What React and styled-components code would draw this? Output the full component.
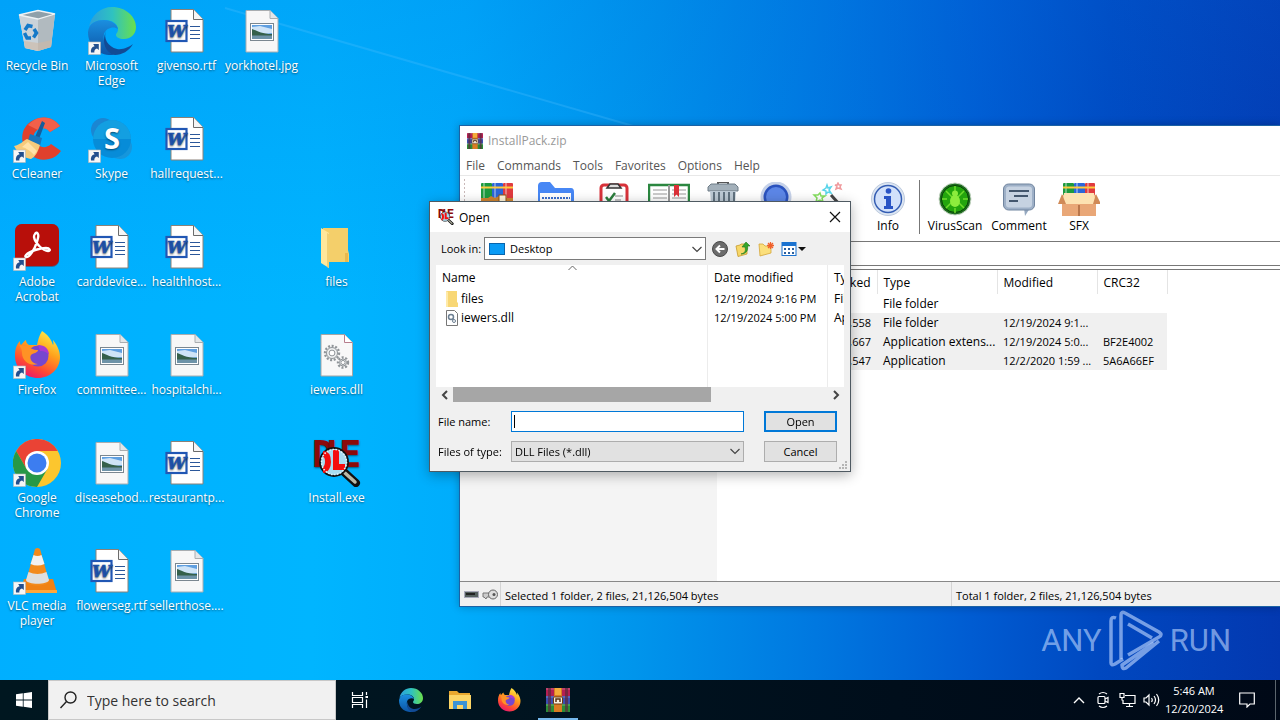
import React from "react";
import styled, { createGlobalStyle } from "styled-components";

const GlobalStyle = createGlobalStyle`
  * {
    box-sizing: border-box;
  }

  body {
    margin: 0;
    font-family: "Open Sans", "Noto Sans", sans-serif;
    font-size: 12px;
    color: #000;
  }

  button, input, select {
    font: inherit;
    color: inherit;
    border-radius: 0;
    margin: 0;
  }
`;

/* ---------- Desktop ---------- */

const Screen = styled.div`
  display: flex;
  flex-direction: column;
  height: 100vh;
  overflow: hidden;
`;

const Desktop = styled.main`
  position: relative;
  flex: 1;
  min-height: 0;
  overflow: hidden;
  background:
    linear-gradient(180deg, rgba(0, 110, 225, 0.2) 0, rgba(0, 110, 225, 0) 45%),
    linear-gradient(91deg, #00afff 0%, #00b5ff 25%, #00adfc 36%, #0095ec 50%, #0078e0 64%, #005cd2 76%, #0048c0 86%, #0338b0 100%);
`;

const LightBeam = styled.svg`
  position: absolute;
  inset: 0;
  width: 100%;
  height: 100%;
`;

const IconGrid = styled.div`
  position: relative;
  display: grid;
  grid-template-columns: 74px repeat(4, 75px);
  grid-auto-rows: 108px;
`;

const Shortcut = styled.a`
  grid-column: ${(p) => p.$col};
  grid-row: ${(p) => p.$row};
  display: flex;
  flex-direction: column;
  align-items: center;
  gap: 3px;
  padding-top: 7px;
  color: #fff;
  text-decoration: none;
  text-align: center;
  line-height: 15px;
  white-space: nowrap;
  text-shadow: 0 1px 2px rgba(0, 0, 0, 0.5);
`;

const ShortcutLabel = styled.span`
  white-space: pre-line;
`;

const Watermark = styled.div`
  position: absolute;
  right: 49px;
  bottom: 8px;
  display: flex;
  align-items: center;
  gap: 6px;
  color: rgba(190, 215, 255, 0.62);
  font-family: "Roboto", sans-serif;
  font-size: 31px;
  line-height: 62px;
`;

/* ---------- Archive window ---------- */

const ArchiveWindow = styled.section`
  position: absolute;
  left: 459px;
  right: 0;
  top: 125px;
  height: 482px;
  display: flex;
  flex-direction: column;
  background: #fff;
  border: 1px solid #1c62a5;
  border-right: 0;
  box-shadow: 0 0 8px rgba(0, 0, 0, 0.25);
`;

const ArchiveTitle = styled.header`
  display: flex;
  align-items: center;
  gap: 5px;
  height: 29px;
  padding-left: 7px;
  color: #999;
`;

const Menu = styled.nav`
  display: flex;
  gap: 12px;
  height: 21px;
  padding-left: 6px;
  line-height: 21px;
  border-bottom: 1px solid #e8e8e8;
`;

const MenuItem = styled.a`
  color: #555;
  text-decoration: none;
`;

const Toolbar = styled.div`
  display: flex;
  align-items: stretch;
  height: 66px;
  padding-left: 8px;
  border-bottom: 1px solid #777;
  background: repeating-linear-gradient(#c9b9b9 0 2px, #fff 2px 4px) 4px 3px / 1px 58px no-repeat;
`;

const Tool = styled.button`
  display: flex;
  flex-direction: column;
  align-items: center;
  width: ${(p) => p.$width}px;
  padding: 6px 0 0;
  border: 0;
  background: none;
  line-height: 17px;
  white-space: nowrap;
`;

const ToolDivider = styled.span`
  width: 1px;
  margin: 4px 2px 7px 3px;
  background: #777;
`;

const AddressInput = styled.input`
  height: 24px;
  border: 0;
  border-bottom: 1px solid #777;
  background: #fff;
  outline: 0;
`;

const ArchiveBody = styled.div`
  display: flex;
  flex: 1;
  min-height: 0;
  margin-top: 3px;
  border-top: 1px solid #777;
  border-bottom: 1px solid #888;
`;

const TreePane = styled.aside`
  width: 257px;
  background: #f4f4f4;
`;

const ArchiveTable = styled.table`
  align-self: flex-start;
  width: 450px;
  table-layout: fixed;
  border-collapse: collapse;

  th, td {
    height: 19px;
    padding: 0 6px;
    text-align: left;
    font-weight: 400;
    line-height: 19px;
    overflow: hidden;
    white-space: nowrap;
  }

  th {
    height: 24px;
    border-right: 1px solid #e4e4e4;
  }

  td {
    font-size: 11px;
  }

  th:nth-child(2), td:nth-child(2) {
    text-align: right;
  }

  td:nth-child(3) {
    font-size: 12px;
    padding-right: 0;
  }
`;

const ArchiveRow = styled.tr`
  background: ${(p) => (p.$selected ? "#f0f0f0" : "none")};
`;

const StatusBar = styled.footer`
  display: flex;
  height: 24px;
  background: #f0f0f0;
  font-size: 11px;
`;

const StatusCell = styled.div`
  display: flex;
  align-items: center;
  width: ${(p) => p.$width};
  padding: 2px 0 0 4px;
  border-left: ${(p) => (p.$first ? "0" : "1px solid #d4d4d4")};
`;

/* ---------- Open dialog ---------- */

const Dialog = styled.section`
  position: absolute;
  left: 429px;
  top: 201px;
  width: 422px;
  display: flex;
  flex-direction: column;
  background: #f0f0f0;
  border: 1px solid #4f5a62;
  box-shadow: 0 3px 12px rgba(0, 0, 0, 0.3);
`;

const DialogTitle = styled.header`
  display: flex;
  align-items: center;
  gap: 5px;
  height: 30px;
  padding: 0 8px;
  background: #fff;
`;

const CloseButton = styled.button`
  display: flex;
  margin-left: auto;
  padding: 0;
  border: 0;
  background: none;
`;

const LookInRow = styled.div`
  display: flex;
  align-items: center;
  height: 33px;
  padding-left: 11px;
  font-size: 11px;
`;

const LookInLabel = styled.label`
  width: 43px;
  white-space: nowrap;
`;

const SelectBox = styled.div`
  display: flex;
  align-items: center;
  width: ${(p) => p.$width}px;
  height: ${(p) => (p.$filled ? 21 : 23)}px;
  padding: 0 3px;
  gap: 4px;
  border: 1px solid ${(p) => (p.$filled ? "#adadad" : "#7a7a7a")};
  background: ${(p) => (p.$filled ? "#e1e1e1" : "#fff")};
`;

const Select = styled.select`
  flex: 1;
  min-width: 0;
  height: 19px;
  padding: 0;
  border: 0;
  outline: 0;
  appearance: none;
  background: none;
`;

const NavButtons = styled.div`
  display: flex;
  gap: 7px;
  margin-left: 6px;
`;

const NavButton = styled.button`
  display: flex;
  padding: 0;
  border: 0;
  background: none;
`;

const FileList = styled.div`
  margin: 0 6px;
  height: 122px;
  overflow: hidden;
  background:
    linear-gradient(#ececec, #ececec) 271px 0 / 1px 100% no-repeat,
    linear-gradient(#ececec, #ececec) 391px 0 / 1px 100% no-repeat,
    #fff;
`;

const SortMark = styled.svg`
  position: absolute;
  left: 132px;
  top: 0;
`;

const FileTable = styled.table`
  position: relative;
  width: 408px;
  table-layout: fixed;
  border-collapse: collapse;

  th, td {
    height: 19px;
    padding: 0 0 0 6px;
    text-align: left;
    font-weight: 400;
    line-height: 19px;
    overflow: hidden;
    white-space: nowrap;
  }

  th {
    height: 24px;
  }

  td:nth-child(2) {
    font-size: 11px;
  }
`;

const FileName = styled.span`
  display: flex;
  align-items: center;
  gap: 2px;
  padding-left: 3px;
`;

const ScrollBar = styled.div`
  display: flex;
  align-items: center;
  height: 15px;
  margin: 0 6px 4px;
`;

const ScrollArrow = styled.button`
  display: flex;
  justify-content: center;
  width: 17px;
  padding: 0;
  border: 0;
  background: none;
`;

const ScrollTrack = styled.div`
  flex: 1;
  height: 100%;
`;

const ScrollThumb = styled.div`
  width: 69%;
  height: 100%;
  background: #a6a6a6;
`;

const FieldRow = styled.div`
  display: flex;
  align-items: center;
  height: 30px;
  padding: 0 13px 0 8px;
  font-size: 11px;
`;

const FieldLabel = styled.label`
  width: 73px;
`;

const FileInput = styled.input`
  width: 233px;
  height: 21px;
  padding: 0 3px;
  border: 1px solid #0078d7;
  outline: 0;
  background: linear-gradient(#000, #000) 2px 3px / 1px 13px no-repeat #fff;
  caret-color: transparent;
`;

const DialogButton = styled.button`
  width: 73px;
  height: 21px;
  margin-left: auto;
  padding: 0;
  border: ${(p) => (p.$primary ? "2px solid #0078d7" : "1px solid #adadad")};
  background: #e1e1e1;
`;

const GripRow = styled.div`
  display: flex;
  justify-content: flex-end;
  align-items: flex-end;
  height: 5px;
  padding: 0 2px 1px 0;
`;

/* ---------- Taskbar ---------- */

const Taskbar = styled.footer`
  display: flex;
  align-items: stretch;
  height: 40px;
  background: linear-gradient(90deg, #001720, #001420 40%, #000e1b 70%, #000917);
  color: #fff;
`;

const TaskButton = styled.button`
  display: flex;
  align-items: center;
  justify-content: center;
  width: ${(p) => p.$width || 48}px;
  padding: 0;
  border: 0;
  background: ${(p) =>
    p.$active ? "linear-gradient(#76b9ed, #76b9ed) 50% 100% / 40px 2px no-repeat" : "none"};
`;

const SearchBox = styled.label`
  display: flex;
  align-items: center;
  gap: 10px;
  width: 288px;
  padding: 0 11px;
  border: 1px solid #c8c8c8;
  background: #f1f1f1;
  color: #333;
`;

const SearchInput = styled.input`
  flex: 1;
  min-width: 0;
  padding: 0;
  border: 0;
  outline: 0;
  background: none;
  font-size: 14px;

  &::placeholder {
    color: #333;
    opacity: 1;
  }
`;

const Apps = styled.div`
  display: flex;
  gap: 1px;
  margin-left: 3px;
`;

const Tray = styled.div`
  display: flex;
  margin-left: auto;
`;

const Clock = styled.time`
  width: 60px;
  padding: 2px 0 0 2px;
  font-size: 11px;
  line-height: 18px;
  text-align: center;
  white-space: pre-line;
`;

const ShowDesktop = styled.button`
  width: 5px;
  margin-left: 4px;
  padding: 0;
  border: 0;
  border-left: 1px solid #5c666d;
  background: none;
`;

/* ---------- Icons ---------- */

const Icon48 = ({ children, link }) => (
  <svg width="48" height="48" viewBox="0 0 48 48" aria-hidden="true">
    {children}
    {link && (
      <g>
        <rect x="0.500" y="35" width="12" height="12.500" fill="#f6f6f6" stroke="#b8b8b8" strokeWidth="0.6" />
        <path d="M3 45.500c-.6-3 .6-5.600 3.600-6.300L5.200 37h5.600v6L9 41.400c-2 .4-3 2-2.600 4.100z" fill="#234f8e" />
      </g>
    )}
  </svg>
);

const RecycleIcon = () => (
  <Icon48>
    <path d="M6 8 25 3.500 42 7 38 40 25 44 12 41z" fill="#d8dde1" />
    <path d="M6 8 25 12 25 44 12 41z" fill="#c9d2d9" />
    <path d="M25 12 42 7 38 40 25 44z" fill="#b1babf" />
    <path d="M6 8 25 3.500 42 7 25 12z" fill="#8fa0aa" stroke="#eef2f4" strokeWidth="1.300" />
    <path d="M11 34 25 36 39 33 38 40 25 44 12 41z" fill="#cfb9a5" opacity=".6" />
    <g fill="none" stroke="#1479c8" strokeWidth="3.500">
      <path d="M12 23l3-4.500 4.500 1" />
      <path d="M21 22l2.500 4-3 4.500" />
      <path d="M18 31h-4l-2.500-5" />
    </g>
  </Icon48>
);

const EdgeShape = () => (
  <g>
    <defs>
      <linearGradient id="edgeTop" x1="0" y1="0.500" x2="1" y2="0.500">
        <stop offset="0" stopColor="#2b9fdc" />
        <stop offset=".5" stopColor="#2fc2c0" />
        <stop offset="1" stopColor="#6be04a" />
      </linearGradient>
      <linearGradient id="edgeMid" x1="0" y1="0" x2="0" y2="1">
        <stop offset="0" stopColor="#1b8fe0" />
        <stop offset="1" stopColor="#0c54a5" />
      </linearGradient>
    </defs>
    <path d="M1 20C3 8 13 0 24 0c14 0 24 10 24 20 0 8-6 12-12 12-5 0-8-2-8-4s2-2 2-6c0-5-6-9-13-9C9 13 3 16 1 20z" fill="url(#edgeTop)" />
    <path d="M0 25c1-9 8-12 16-12 7 0 13 4 14 9-3-3-12-2-14 5-2 8 4 17 12 20-3 1-5 1-7 1C8 47 0 37 0 25z" fill="url(#edgeMid)" />
    <path d="M18 24c-3 7 2 16 11 18 6 1 12-2 16-5-4 7-11 11-18 11-9-2-14-12-9-24z" fill="#124b95" />
  </g>
);

const WordIcon = () => (
  <Icon48>
    <path d="M8 2.500h22.500l9.500 10V45H8z" fill="#fff" stroke="#8a8178" />
    <path d="M30.500 2.500v10H40" fill="#f5f5f5" stroke="#6b6b6b" />
    <path d="M27 19.500h10M27 23.500h10M27 27.500h10M27 31.500h10" stroke="#2b579a" />
    <rect x="3.500" y="14" width="20" height="20" fill="#fff" stroke="#2157b4" strokeWidth="2.200" />
    <text x="13.500" y="30" textAnchor="middle" fontFamily="DejaVu Serif" fontWeight="700" fontStyle="italic" fontSize="17" fill="#2157b4" stroke="#2157b4" strokeWidth=".6">W</text>
  </Icon48>
);

const ImageIcon = () => (
  <Icon48>
    <path d="M8 3.500h24l8 8V45H8z" fill="#f7f7f7" stroke="#a9adb0" />
    <path d="M32 3.500v8h8" fill="#e3e6e8" stroke="#a9adb0" />
    <rect x="12.500" y="16.500" width="23" height="17" fill="#fff" stroke="#7b8790" />
    <rect x="14" y="18" width="20" height="14" fill="#5f9fe0" />
    <path d="M14 20l8-1 12 3v4l-8 1-12-3z" fill="#cfe4f7" />
    <path d="M14 22c4 1 9 5 20 5v2H14z" fill="#35604a" />
    <path d="M14 28.500h20V32H14z" fill="#6e93a8" />
  </Icon48>
);

const FolderIcon = () => (
  <Icon48>
    <path d="M10 5h25v22l1 4v8H12z" fill="#f4cf6a" />
    <path d="M32 30h3v9h-3z" fill="#e9b94e" />
    <path d="M8 5l8 5v35l-8-5z" fill="#ffe79b" />
    <path d="M14 10l2 1v34l-2-1z" fill="#f1cf73" />
  </Icon48>
);

const Gear = ({ cx, cy, r }) => (
  <g fill="none" stroke="#909599">
    <circle cx={cx} cy={cy} r={r} strokeWidth="2.400" strokeDasharray="2 1.600" />
    <circle cx={cx} cy={cy} r={r - 1.5} fill="#eef0f1" />
    <circle cx={cx} cy={cy} r={r / 2.4} fill="#fff" />
  </g>
);

const DllIcon = () => (
  <Icon48>
    <path d="M8 3.500h23.500l8 8V45H8z" fill="#f8f8f8" stroke="#a5a5a5" />
    <path d="M31.500 3.500v8h8" fill="#fff" stroke="#b77d8c" />
    <Gear cx={19} cy={22} r={7} />
    <Gear cx={30} cy={31.500} r={5} />
  </Icon48>
);

const InstallShape = () => (
  <g>
    <g fontFamily="DejaVu Sans Mono" fontWeight="700" fontSize="37" fill="#8b0a0a">
      <text x="-1" y="28">D</text>
      <text x="12" y="28">L</text>
      <text x="26" y="28">E</text>
    </g>
    <path d="M31 33 43 44" stroke="#111" strokeWidth="8" strokeLinecap="round" />
    <path d="M32 34 42 43" stroke="#b9b9a8" strokeWidth="3.500" strokeLinecap="round" />
    <circle cx="21" cy="23" r="14" fill="#a9dcf0" stroke="#111" strokeWidth="2" />
    <path d="M10 15c4 0 5 4 5 8s-2 8-5 8M23 11v17h9" fill="none" stroke="#f40d0d" strokeWidth="6" />
    <circle cx="21" cy="23" r="12.500" fill="none" stroke="#e7f4fa" strokeWidth="1.500" strokeDasharray="1.500 1.500" />
  </g>
);

const CCleanerIcon = () => (
  <Icon48 link>
    <path d="M47 11C42 4 34 1 26 3 14 6 7 16 10 28c3 12 15 19 26 16 5-1 9-4 12-8l-10-7c-4 4-9 4-13 1-6-4-6-13 1-16 4-2 8-1 11 3z" fill="#e0402d" />
    <path d="M47 11C42 4 34 1 26 3c-4 1-8 4-11 7l10 5c4-3 9-2 12 2z" fill="#f2604a" />
    <path d="M29 6l3 2-6 16-4-2z" fill="#155d9c" />
    <path d="M17 19l12 4-2 8-12-5z" fill="#1977bd" />
    <path d="M1 31c6-1 9-5 13-7l13 6c-2 7-5 12-9 14-6-1-13-5-17-13z" fill="#f6cb7c" />
    <path d="M9 32c4 1 9 4 12 8l3-4-9-9z" fill="#ffe2a8" />
  </Icon48>
);

const SkypeIcon = () => (
  <Icon48 link>
    <circle cx="15" cy="15" r="12" fill="#1b86d2" />
    <circle cx="32" cy="32" r="12" fill="#1696dc" />
    <circle cx="24" cy="24" r="19" fill="#078cd8" />
    <path d="M5 24a19 19 0 0 1 38 0z" fill="#18a6e6" opacity=".7" />
    <text x="24" y="34" textAnchor="middle" fontFamily="Open Sans" fontWeight="700" fontSize="29" fill="#fff">S</text>
  </Icon48>
);

const AcrobatIcon = () => (
  <Icon48 link>
    <rect x="2" y="1" width="44" height="43" rx="7" fill="#7b1a22" opacity=".5" />
    <rect x="2" y="1" width="44" height="42" rx="7" fill="#b80f0a" />
    <path d="M22 11c2-3 4 0 3 4-1 6-5 14-9 18-2 2-5 1-3-1 4-4 14-7 20-7 4 0 5 3 2 3-5 0-13-8-14-14 0-1 0-2 1-3z" fill="none" stroke="#fff" strokeWidth="2.400" />
  </Icon48>
);

const FirefoxShape = () => (
  <g>
    <defs>
      <linearGradient id="foxFire" x1="0.800" y1="0" x2="0.300" y2="1">
        <stop offset="0" stopColor="#fff04a" />
        <stop offset=".4" stopColor="#ffa21c" />
        <stop offset=".75" stopColor="#ff4a33" />
        <stop offset="1" stopColor="#e81770" />
      </linearGradient>
    </defs>
    <path d="M29 0c6 4 9 8 11 14 1-1 0-3 0-5 5 6 7 12 7 17 0 12-10 21-22 21S2 38 2 25c0-6 1-11 5-15 0 2 0 3 1 4 2-2 3-4 5-5 0 2 1 4 3 5h8c1-5 2-9 5-14z" fill="url(#foxFire)" />
    <circle cx="25" cy="25" r="10.500" fill="#7647cf" />
    <path d="M25 14c7 0 11 4 11 10-3-4-7-4-9-4z" fill="#a93ad2" />
    <path d="M6 14c5 1 8 1 11 1-1 2 3 4 8 4 0 3-5 3-7 5-2 3 1 9 7 9-8 3-16-3-16-11 0-3-1-5-3-8z" fill="#ff9225" />
  </g>
);

const ChromeIcon = () => (
  <Icon48 link>
    <circle cx="24" cy="24" r="24" fill="#fcc62e" />
    <path d="M3.200 12A24 24 0 0 1 44.800 12H24L13.600 30z" fill="#ea4335" />
    <path d="M3.200 12A24 24 0 0 0 24 48l10.400-18L24 36 13.600 30z" fill="#279847" />
    <circle cx="24" cy="24" r="12" fill="#fff" />
    <circle cx="24" cy="24" r="9.500" fill="#3c7df0" />
  </Icon48>
);

const VlcIcon = () => (
  <Icon48 link>
    <path d="M11 32h29l4 14H7z" fill="#f08113" />
    <path d="M8 43h36v3H7z" fill="#ffa73b" />
    <path d="M22 2q2.500-2 5 0l9 32c-1 6-22 6-23 0z" fill="#f28a1c" />
    <path d="M20.500 8q4 2 8 0l3 9q-7 3-14 0z" fill="#f1f1f1" />
    <path d="M15.500 25q9 4 18 0l2.500 8c-1 5-22 5-23 0z" fill="#dedede" />
  </Icon48>
);

const RarShape = () => (
  <g>
    <path d="M0 0h24v8H0z" fill="#b51f52" />
    <path d="M0 8h24v8H0z" fill="#3b4fb0" />
    <path d="M0 16h24v8H0z" fill="#2a8c36" />
    <path d="M0 1h24M0 9h24M0 17h24" stroke="#fff" opacity=".3" />
    <path d="M2 0h3v24H2zM19 0h3v24h-3z" fill="#5b2a3a" opacity=".7" />
    <path d="M8 0h8v24H8z" fill="#d97c22" />
    <path d="M9 0h6v7H9z" fill="#f5ac3a" />
    <rect x="7.500" y="9" width="9" height="7" rx="1" fill="#f5eddc" stroke="#6b3a12" />
    <path d="M10 14v-3h4v3" fill="none" stroke="#5b3512" strokeWidth="1.500" />
  </g>
);

const RarIcon = ({ size }) => (
  <svg width={size} height={size} viewBox="0 0 24 24" aria-hidden="true">
    <RarShape />
  </svg>
);

const Books = () => (
  <g>
    <rect x="1" y="1" width="11" height="22" rx="1" fill="#1d9a3e" />
    <rect x="12" y="1" width="11" height="22" rx="1" fill="#2b66d9" />
    <rect x="23" y="1" width="10" height="22" rx="1" fill="#e03a3f" />
    <path d="M4 1v22M15 1v22M26 1v22" stroke="#fff" strokeWidth="2" opacity=".35" />
    <path d="M1 5.500h32" stroke="#ffc93e" strokeWidth="2" />
  </g>
);

const toolIcons = {
  add: (
    <g>
      <Books />
      <path d="M1 16h7l3-2 4 2 4-2h6l1 2h7v17H1z" fill="#cf8430" />
      <rect x="19" y="13" width="7" height="9" fill="#fff4d8" stroke="#8d5312" />
    </g>
  ),
  extract: (
    <g>
      <path d="M-1 4q0-4 4-4h8l5 6h16q3 0 3 4v23H-1z" fill="#4787f5" />
      <path d="M1 11h31v11H1z" fill="#fff" />
      <path d="M3 16h28" stroke="#3a6fd0" strokeDasharray="2 1" strokeWidth="2" />
    </g>
  ),
  test: (
    <g>
      <rect x="4" y="3" width="26" height="30" rx="3" fill="#fff" stroke="#d8323a" strokeWidth="3" />
      <path d="M10 6l3-4h8l3 4z" fill="#ddd" stroke="#333" strokeWidth="1.500" />
      <path d="M9 15l3 4 6-8" fill="none" stroke="#2a7c3b" strokeWidth="2.500" />
      <path d="M18 14h8M18 18h6" stroke="#888" />
    </g>
  ),
  view: (
    <g>
      <path d="M-3 3h40v30H-3z" fill="#fff" stroke="#2b8740" strokeWidth="2.500" />
      <path d="M1 8h14M1 12h14M1 16h14M20 8h14M20 12h14M20 16h14" stroke="#bbb" strokeWidth="1.500" />
      <path d="M17 3v30" stroke="#999" strokeWidth="2" />
      <path d="M22 3h5v12l-2.500-2.500L22 15z" fill="#dc3038" />
    </g>
  ),
  remove: (
    <g>
      <path d="M12 2V0h10v2" fill="none" stroke="#555" strokeWidth="2" />
      <path d="M2 5l3-3h24l3 3v4H2z" fill="#a3b0ba" stroke="#6e7c87" />
      <path d="M4 9h26l-2 25H6z" fill="#bcc9d4" />
      <path d="M8 10v22M13 10v22M18 10v22M23 10v22M28 10v22" stroke="#61727f" strokeWidth="2" />
    </g>
  ),
  find: (
    <g>
      <circle cx="17" cy="15" r="14" fill="#2a52be" stroke="#c6d2e9" strokeWidth="3" />
      <circle cx="17" cy="15" r="10" fill="#5c86e6" />
    </g>
  ),
  wizard: (
    <g fill="none" strokeWidth="1.500">
      <path d="M13 3l1 3 3-1-2 3 2 3-3-1-2 2v-3l-3-1 3-2z" stroke="#59d5ea" />
      <path d="M24 1l1 2 2 0-1 2 1 2-3-1-2 1 1-3-2-1h2z" stroke="#ef9a9d" />
      <path d="M6 11l1 3 4 0-3 2 1 4-3-2-4 2 1-4-3-3h4z" stroke="#84de5f" />
      <path d="M17 13l18 20" stroke="#444" strokeWidth="3" />
    </g>
  ),
  info: (
    <g>
      <circle cx="17" cy="17" r="16.500" fill="#dce6f3" stroke="#bdcadd" />
      <circle cx="17" cy="17" r="13.500" fill="#d2e1fa" stroke="#345db3" strokeWidth="1.500" />
      <circle cx="17.500" cy="9" r="2.800" fill="#2954c5" />
      <path d="M13 14h7v10h2v3h-9v-3h2v-7h-2z" fill="#2954c5" />
    </g>
  ),
  virus: (
    <g>
      <circle cx="17" cy="17" r="16" fill="#1f6c20" stroke="#c9d7c7" />
      <circle cx="17" cy="17" r="13.500" fill="#23a50d" stroke="#073e08" />
      <g stroke="#6fdc2c" strokeWidth="1.500">
        <path d="M17 4v5M17 26v5M4 17h5M25 17h5M8 9l6 6M26 9l-6 6M8 26l6-6M26 26l-6-6" />
      </g>
      <ellipse cx="17" cy="19" rx="5" ry="6" fill="#8cec3d" />
      <circle cx="17" cy="11.500" r="3" fill="#8cec3d" />
    </g>
  ),
  comment: (
    <g>
      <path d="M22 26l1 8 5-8z" fill="#96a9c0" />
      <rect x="1.500" y="2" width="31" height="26" rx="5" fill="#9eb0c7" stroke="#71859f" />
      <rect x="4" y="4.500" width="26" height="21" rx="3" fill="#c6d2e1" />
      <path d="M7 9h20M12 14h14M7 19h9" stroke="#43566d" strokeWidth="1.800" />
    </g>
  ),
  sfx: (
    <g>
      <Books />
      <path d="M0 13h34v21H0z" fill="#e9a777" />
      <path d="M2 11h30l2 11H0z" fill="#fde2b2" />
      <path d="M0 12l4 10H-4zM34 12l5 10h-8z" fill="#d08a57" />
      <path d="M17 23v11" stroke="#a9663d" strokeWidth="1.500" />
    </g>
  ),
};

const ToolIcon = ({ name }) => (
  <svg width="42" height="35" viewBox="-4 0 42 35" aria-hidden="true">
    {toolIcons[name]}
  </svg>
);

const Chevron = ({ d, size = 10, color = "#444", stroke = 1.2 }) => (
  <svg width={size} height={size} viewBox="0 0 10 10" fill="none" stroke={color} strokeWidth={stroke} aria-hidden="true">
    <path d={d} />
  </svg>
);

/* ---------- Data ---------- */

const shortcuts = [
  { col: 1, row: 1, label: "Recycle Bin", icon: <RecycleIcon /> },
  { col: 2, row: 1, label: "Microsoft\nEdge", icon: <Icon48 link><EdgeShape /></Icon48> },
  { col: 3, row: 1, label: "givenso.rtf", icon: <WordIcon /> },
  { col: 4, row: 1, label: "yorkhotel.jpg", icon: <ImageIcon /> },
  { col: 1, row: 2, label: "CCleaner", icon: <CCleanerIcon /> },
  { col: 2, row: 2, label: "Skype", icon: <SkypeIcon /> },
  { col: 3, row: 2, label: "hallrequest...", icon: <WordIcon /> },
  { col: 1, row: 3, label: "Adobe\nAcrobat", icon: <AcrobatIcon /> },
  { col: 2, row: 3, label: "carddevice...", icon: <WordIcon /> },
  { col: 3, row: 3, label: "healthhost...", icon: <WordIcon /> },
  { col: 5, row: 3, label: "files", icon: <FolderIcon /> },
  { col: 1, row: 4, label: "Firefox", icon: <Icon48 link><FirefoxShape /></Icon48> },
  { col: 2, row: 4, label: "committee...", icon: <ImageIcon /> },
  { col: 3, row: 4, label: "hospitalchi...", icon: <ImageIcon /> },
  { col: 5, row: 4, label: "iewers.dll", icon: <DllIcon /> },
  { col: 1, row: 5, label: "Google\nChrome", icon: <ChromeIcon /> },
  { col: 2, row: 5, label: "diseasebod...", icon: <ImageIcon /> },
  { col: 3, row: 5, label: "restaurantp...", icon: <WordIcon /> },
  { col: 5, row: 5, label: "Install.exe", icon: <Icon48><InstallShape /></Icon48> },
  { col: 1, row: 6, label: "VLC media\nplayer", icon: <VlcIcon /> },
  { col: 2, row: 6, label: "flowerseg.rtf", icon: <WordIcon /> },
  { col: 3, row: 6, label: "sellerthose....", icon: <ImageIcon /> },
];

const tools = [
  ["add", "Add", 58],
  ["extract", "Extract To", 60],
  ["test", "Test", 56],
  ["view", "View", 54],
  ["remove", "Delete", 54],
  ["find", "Find", 52],
  ["wizard", "Wizard", 58],
  ["info", "Info", 56],
];

const extraTools = [
  ["virus", "VirusScan", 66],
  ["comment", "Comment", 62],
  ["sfx", "SFX", 58],
];

const archiveRows = [
  ["", "", "File folder", "", ""],
  ["", ",558", "File folder", "12/19/2024 9:1...", ""],
  ["", ",667", "Application extens...", "12/19/2024 5:0...", "BF2E4002"],
  ["", ",547", "Application", "12/2/2020 1:59 ...", "5A6A66EF"],
];

const renderTools = (list) =>
  list.map(([name, label, width]) => (
    <Tool key={name} type="button" $width={width}>
      <ToolIcon name={name} />
      {label}
    </Tool>
  ));

/* ---------- Parts ---------- */

const Archive = () => (
  <ArchiveWindow>
    <ArchiveTitle>
      <RarIcon size={16} />
      InstallPack.zip
    </ArchiveTitle>
    <Menu>
      {["File", "Commands", "Tools", "Favorites", "Options", "Help"].map((item) => (
        <MenuItem key={item} href="#">{item}</MenuItem>
      ))}
    </Menu>
    <Toolbar>
      {renderTools(tools)}
      <ToolDivider />
      {renderTools(extraTools)}
    </Toolbar>
    <AddressInput aria-label="Path" />
    <ArchiveBody>
      <TreePane />
      <ArchiveTable>
        <colgroup>
          <col width="80" />
          <col width="80" />
          <col width="120" />
          <col width="100" />
          <col width="70" />
        </colgroup>
        <thead>
          <tr>
            <th />
            <th>Packed</th>
            <th>Type</th>
            <th>Modified</th>
            <th>CRC32</th>
          </tr>
        </thead>
        <tbody>
          {archiveRows.map((row, i) => (
            <ArchiveRow key={i} $selected={i > 0}>
              {row.map((cell, j) => (
                <td key={j}>{cell}</td>
              ))}
            </ArchiveRow>
          ))}
        </tbody>
      </ArchiveTable>
    </ArchiveBody>
    <StatusBar>
      <StatusCell $first $width="40px">
        <svg width="34" height="14" viewBox="0 0 34 14" aria-hidden="true">
          <rect x="0.500" y="3.500" width="14" height="6" fill="#55605f" stroke="#aab" />
          <path d="M2 6h9" stroke="#222" strokeWidth="2" />
          <path d="M19 5h9v4h-5l-1 2-2-2h-1z" fill="#ccc" stroke="#777" />
          <circle cx="29" cy="6.500" r="4.500" fill="#ddd" stroke="#666" />
          <circle cx="30" cy="6.500" r="1.500" fill="#555" />
        </svg>
      </StatusCell>
      <StatusCell $width="55%">Selected 1 folder, 2 files, 21,126,504 bytes</StatusCell>
      <StatusCell $width="40%">Total 1 folder, 2 files, 21,126,504 bytes</StatusCell>
    </StatusBar>
  </ArchiveWindow>
);

const OpenDialog = () => (
  <Dialog role="dialog" aria-label="Open">
    <DialogTitle>
      <svg width="16" height="16" viewBox="0 0 48 48" aria-hidden="true">
        <InstallShape />
      </svg>
      Open
      <CloseButton type="button" aria-label="Close">
        <svg width="14" height="14" viewBox="0 0 14 14" stroke="#111" strokeWidth="1.200">
          <path d="M2 2l10 10M12 2L2 12" />
        </svg>
      </CloseButton>
    </DialogTitle>
    <LookInRow>
      <LookInLabel htmlFor="lookIn">Look in:</LookInLabel>
      <SelectBox $width={222}>
        <svg width="18" height="14" viewBox="0 0 18 14" aria-hidden="true">
          <rect x="1.500" y="1.500" width="15" height="11" fill="#0a9bf5" stroke="#0865ad" />
        </svg>
        <Select id="lookIn">
          <option>Desktop</option>
        </Select>
        <Chevron d="M0.500 3l4.500 4.500L9.500 3" />
      </SelectBox>
      <NavButtons>
        <NavButton type="button" aria-label="Back">
          <svg width="16" height="16" viewBox="0 0 16 16">
            <circle cx="8" cy="8" r="7.500" fill="#6c6c6c" stroke="#4a4a4a" />
            <path d="M12.500 8H5M8 4.500L4.500 8 8 11.500" fill="none" stroke="#fff" strokeWidth="2" />
          </svg>
        </NavButton>
        <NavButton type="button" aria-label="Up one level">
          <svg width="16" height="16" viewBox="0 0 16 16">
            <path d="M1 5l4-1 1-1h6v10l-9 2.500z" fill="#f7d768" stroke="#c69a2c" strokeWidth=".8" />
            <path d="M6 13c4-1 5-3 4-7H7l4-5 4 4h-2.500c1 5-2 8-6.500 8z" fill="#35a52a" stroke="#1f7a1b" strokeWidth=".6" />
          </svg>
        </NavButton>
        <NavButton type="button" aria-label="New folder">
          <svg width="16" height="16" viewBox="0 0 16 16">
            <path d="M1 3h4l2 2h6v7L2 15z" fill="#fbdf7c" stroke="#d4a63a" strokeWidth=".8" />
            <path d="M12.500 1v7M9 4.500h7M10 2l5 5M15 2l-5 5" stroke="#f0602a" strokeWidth="1.300" />
          </svg>
        </NavButton>
        <NavButton type="button" aria-label="View menu">
          <svg width="26" height="16" viewBox="0 0 26 16">
            <rect x="1" y="1.500" width="14" height="13" fill="#fff" stroke="#1a72d0" />
            <path d="M1 3.500h14" stroke="#1a72d0" strokeWidth="3" />
            <path d="M3 8h2M7 8h2M11 8h2M3 12h2M7 12h2M11 12h2" stroke="#2b5f9e" strokeWidth="2" />
            <path d="M17 6h8l-4 4z" fill="#111" />
          </svg>
        </NavButton>
      </NavButtons>
    </LookInRow>
    <FileList>
      <FileTable>
        <colgroup>
          <col width="272" />
          <col width="120" />
          <col width="16" />
        </colgroup>
        <thead>
          <tr>
            <th>
              Name
              <SortMark width="9" height="6" viewBox="0 0 9 6" fill="none" stroke="#666">
                <path d="M0.500 5l4-4 4 4" />
              </SortMark>
            </th>
            <th>Date modified</th>
            <th>Type</th>
          </tr>
        </thead>
        <tbody>
          <tr>
            <td>
              <FileName>
                <svg width="14" height="16" viewBox="0 0 14 16" aria-hidden="true">
                  <path d="M1 0h11v11l1 1v4H1z" fill="#f8d775" />
                  <path d="M1 0l2 1v15H1z" fill="#ffeaa8" />
                </svg>
                files
              </FileName>
            </td>
            <td>12/19/2024 9:16 PM</td>
            <td>File folder</td>
          </tr>
          <tr>
            <td>
              <FileName>
                <svg width="14" height="16" viewBox="0 0 14 16" aria-hidden="true">
                  <path d="M1.500 .5h8l3 3v12h-11z" fill="#fff" stroke="#777" />
                  <circle cx="6" cy="7" r="2.500" fill="none" stroke="#6c7f92" strokeWidth="1.500" />
                  <circle cx="9" cy="11" r="1.500" fill="none" stroke="#6c7f92" />
                </svg>
                iewers.dll
              </FileName>
            </td>
            <td>12/19/2024 5:00 PM</td>
            <td>Application extension</td>
          </tr>
        </tbody>
      </FileTable>
    </FileList>
    <ScrollBar>
      <ScrollArrow type="button" aria-label="Scroll left">
        <Chevron d="M7 1L3 5l4 4" stroke={2} />
      </ScrollArrow>
      <ScrollTrack>
        <ScrollThumb />
      </ScrollTrack>
      <ScrollArrow type="button" aria-label="Scroll right">
        <Chevron d="M3 1l4 4-4 4" stroke={2} />
      </ScrollArrow>
    </ScrollBar>
    <FieldRow>
      <FieldLabel htmlFor="fileName">File name:</FieldLabel>
      <FileInput id="fileName" autoFocus />
      <DialogButton type="button" $primary>Open</DialogButton>
    </FieldRow>
    <FieldRow>
      <FieldLabel htmlFor="fileType">Files of type:</FieldLabel>
      <SelectBox $width={233} $filled>
        <Select id="fileType">
          <option>DLL Files (*.dll)</option>
        </Select>
        <Chevron d="M0.500 3l4.500 4.500L9.500 3" />
      </SelectBox>
      <DialogButton type="button">Cancel</DialogButton>
    </FieldRow>
    <GripRow>
      <svg width="9" height="9" viewBox="0 0 9 9" fill="#b5b5b5" aria-hidden="true">
        <path d="M6 0h2v2H6zM3 3h2v2H3zM6 3h2v2H6zM0 6h2v2H0zM3 6h2v2H3zM6 6h2v2H6z" />
      </svg>
    </GripRow>
  </Dialog>
);

const WindowsTaskbar = () => (
  <Taskbar>
    <TaskButton type="button" aria-label="Start">
      <svg width="16" height="16" viewBox="0 0 16 16" fill="#fff">
        <path d="M0 2.200L6.800 1.300v6.300H0zM7.600 1.200L16 0v7.600H7.600zM0 8.400h6.800v6.300L0 13.800zM7.600 8.400H16V16l-8.400-1.200z" />
      </svg>
    </TaskButton>
    <SearchBox>
      <svg width="17" height="18" viewBox="0 0 17 18" fill="none" stroke="#222" strokeWidth="1.400">
        <circle cx="10.500" cy="6.500" r="5.500" />
        <path d="M6.500 10.500L0.500 17" />
      </svg>
      <SearchInput placeholder="Type here to search" />
    </SearchBox>
    <TaskButton type="button" aria-label="Task View">
      <svg width="18" height="18" viewBox="0 0 18 18" fill="none" stroke="#fff" strokeWidth="1.200">
        <path d="M1.500 1v3.500h10V1M1.500 17v-3.500h10V17M1.500 6.500h10v5h-10zM15.500 1v3M15.500 8.500V17" />
        <path d="M14.500 6h2.500" strokeWidth="2" />
      </svg>
    </TaskButton>
    <Apps>
      <TaskButton type="button" aria-label="Microsoft Edge">
        <svg width="24" height="24" viewBox="0 0 48 48"><EdgeShape /></svg>
      </TaskButton>
      <TaskButton type="button" aria-label="File Explorer">
        <svg width="22" height="20" viewBox="0 0 22 20">
          <path d="M0 1h8l2 2h11v5H0z" fill="#e9a82f" />
          <path d="M0 5h22v14H0z" fill="#fcd566" />
          <path d="M4 11h14v8h-4v-4H8v4H4z" fill="#3b93d6" />
        </svg>
      </TaskButton>
      <TaskButton type="button" aria-label="Firefox">
        <svg width="24" height="24" viewBox="0 0 48 48"><FirefoxShape /></svg>
      </TaskButton>
      <TaskButton type="button" aria-label="WinRAR" $active>
        <RarIcon size={24} />
      </TaskButton>
    </Apps>
    <Tray>
      <TaskButton type="button" $width={24} aria-label="Show hidden icons">
        <svg width="12" height="8" viewBox="0 0 12 8" fill="none" stroke="#fff" strokeWidth="1.400">
          <path d="M1 7l5-5 5 5" />
        </svg>
      </TaskButton>
      <TaskButton type="button" $width={24} aria-label="Meet Now">
        <svg width="14" height="18" viewBox="0 0 14 18" fill="none" stroke="#fff" strokeWidth="1.200">
          <rect x="2" y="5.500" width="7" height="7" rx="1" />
          <path d="M9 8l3-1.500v5L9 10M3 3q4-3 8 0M3 15q4 3 8 0" />
        </svg>
      </TaskButton>
      <TaskButton type="button" $width={24} aria-label="Network">
        <svg width="17" height="16" viewBox="0 0 17 16" fill="none" stroke="#fff" strokeWidth="1.200">
          <path d="M6 3.500h10v8H4V8M7 14.500h7M10.500 11.500v3M1 1.500h4v4H1zM3 5.500v3" />
        </svg>
      </TaskButton>
      <TaskButton type="button" $width={24} aria-label="Volume">
        <svg width="17" height="14" viewBox="0 0 17 14" fill="none" stroke="#fff" strokeWidth="1.200">
          <path d="M1 5h2l3-3v10L3 9H1zM8.500 5q1.500 2 0 4M11 3q3 4 0 8M13.500 1q4.500 6 0 12" />
        </svg>
      </TaskButton>
      <Clock>{"5:46 AM\n12/20/2024"}</Clock>
      <TaskButton type="button" aria-label="Notifications">
        <svg width="16" height="16" viewBox="0 0 16 16" fill="none" stroke="#fff" strokeWidth="1.200">
          <path d="M.7 1h14.600v11H11l-3 3v-3H.7z" />
        </svg>
      </TaskButton>
      <ShowDesktop type="button" aria-label="Show desktop" />
    </Tray>
  </Taskbar>
);

const App = () => (
  <Screen>
    <GlobalStyle />
    <Desktop>
      <LightBeam viewBox="0 0 1280 680" preserveAspectRatio="none" aria-hidden="true">
        <path d="M225 8 640 128" fill="none" stroke="#5cc4ff" strokeWidth="2" opacity=".25" />
      </LightBeam>
      <IconGrid>
        {shortcuts.map((s) => (
          <Shortcut key={s.label} href="#" $col={s.col} $row={s.row}>
            {s.icon}
            <ShortcutLabel>{s.label}</ShortcutLabel>
          </Shortcut>
        ))}
      </IconGrid>
      <Watermark>
        ANY
        <svg width="56" height="62" viewBox="0 0 56 62" fill="none" stroke="currentColor" strokeWidth="3.500" strokeLinejoin="round" aria-hidden="true">
          <path d="M13 49V5q0-4 4-2l34 19q4 3 0 5L20 45M20 14l24 14" />
          <path d="M8 8q-5-2-5 3v42q0 3 4 1l8-5M51 31L18 58q-4 2-4-3l32-22" />
        </svg>
        RUN
      </Watermark>
      <Archive />
      <OpenDialog />
    </Desktop>
    <WindowsTaskbar />
  </Screen>
);

export default App;
